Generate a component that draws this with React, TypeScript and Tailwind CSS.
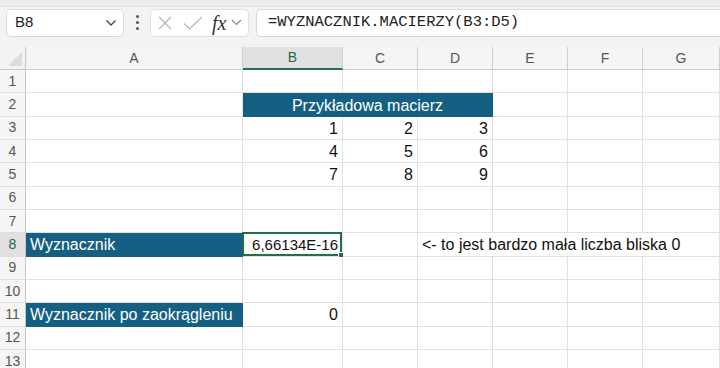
import React from "react";

type Cell = {
  text?: string;
  span?: number;
  align?: "left" | "right" | "center";
  fill?: boolean;
  selected?: boolean;
};

const cols = ["A", "B", "C", "D", "E", "F", "G"];

const empty = (n: number): Cell[] => Array.from({ length: n }, () => ({}));

const rows: Cell[][] = [
  empty(7),
  [{}, { text: "Przykładowa macierz", span: 3, align: "center", fill: true }, ...empty(3)],
  [{}, { text: "1", align: "right" }, { text: "2", align: "right" }, { text: "3", align: "right" }, ...empty(3)],
  [{}, { text: "4", align: "right" }, { text: "5", align: "right" }, { text: "6", align: "right" }, ...empty(3)],
  [{}, { text: "7", align: "right" }, { text: "8", align: "right" }, { text: "9", align: "right" }, ...empty(3)],
  empty(7),
  empty(7),
  [
    { text: "Wyznacznik", fill: true },
    { text: "6,66134E-16", align: "right", selected: true },
    {},
    { text: "<- to jest bardzo mała liczba bliska 0", span: 4 },
  ],
  empty(7),
  empty(7),
  [{ text: "Wyznacznik po zaokrągleniu", fill: true }, { text: "0", align: "right" }, ...empty(5)],
  empty(7),
  empty(7),
];

const spanClass: Record<number, string> = {
  1: "col-span-1",
  3: "col-span-3",
  4: "col-span-4",
};

const GridCell = ({ cell }: { cell: Cell }) => {
  const align =
    cell.align === "right"
      ? "justify-end pr-[4px]"
      : cell.align === "center"
      ? "justify-center"
      : "justify-start pl-[4px]";
  return (
    <div
      className={`relative flex items-center h-[23.33px] whitespace-nowrap border-r border-b ${
        spanClass[cell.span ?? 1]
      } ${align} ${
        cell.fill
          ? "bg-[#156082] text-white border-[#156082]"
          : "bg-white text-[#111] border-[#e1e1e1]"
      }`}
    >
      {cell.text && (
        <span className={`pt-[2px] ${cell.selected ? "text-[15px]" : ""}`}>{cell.text}</span>
      )}
      {cell.selected && (
        <>
          <div className="absolute -left-[1px] -top-[1px] right-0 bottom-0 border-2 border-[#217346]" />
          <div className="absolute -right-[3px] -bottom-[3px] w-[7px] h-[7px] bg-[#217346] border border-white" />
        </>
      )}
    </div>
  );
};

const Toolbar = () => (
  <div className="h-[47px] bg-[#f3f3f3] overflow-hidden">
    <div className="h-[7px] bg-[#ebebeb] border-b border-[#e2e2e2]" />
    <div className="flex items-center pt-[1px] pl-[6px] h-[30px]">
      <div className="shrink-0 w-[118px] h-[28px] bg-white border border-[#d9d9d9] rounded-[5px] flex items-center justify-between pl-[8px] pr-[6px] text-[15px] text-[#222]">
        <span>B8</span>
        <svg width="12" height="8" viewBox="0 0 12 8" fill="none">
          <path d="M1.5 1.5 L6 6 L10.5 1.5" stroke="#444" strokeWidth="1.3" />
        </svg>
      </div>
      <div className="shrink-0 w-[26px] flex flex-col items-center justify-center gap-[3px]">
        <span className="w-[3px] h-[3px] rounded-full bg-[#555]" />
        <span className="w-[3px] h-[3px] rounded-full bg-[#555]" />
        <span className="w-[3px] h-[3px] rounded-full bg-[#555]" />
      </div>
      <div className="shrink-0 w-[99px] h-[28px] bg-white border border-[#e0e0e0] rounded-[5px] flex items-center pl-[7px]">
        <svg width="14" height="14" viewBox="0 0 14 14" fill="none">
          <path d="M1 1 L13 13 M13 1 L1 13" stroke="#b5b5b5" strokeWidth="1.2" />
        </svg>
        <svg width="20" height="14" viewBox="0 0 20 14" fill="none" className="ml-[11px]">
          <path d="M1 7.5 L6.5 13 L19 1" stroke="#b5b5b5" strokeWidth="1.2" />
        </svg>
        <span className="ml-[9px] italic text-[20px] leading-none text-[#333] [font-family:'Liberation_Serif',serif]">
          fx
        </span>
        <svg width="11" height="7" viewBox="0 0 11 7" fill="none" className="ml-[5px]">
          <path d="M1 1 L5.5 5.5 L10 1" stroke="#8a8a8a" strokeWidth="1.2" />
        </svg>
      </div>
      <div className="shrink-0 ml-[7px] w-[480px] h-[28px] bg-white border border-[#d9d9d9] rounded-[5px] flex items-center pl-[11px] text-[15.5px] text-[#222] [font-family:'Liberation_Mono',monospace]">
        =WYZNACZNIK.MACIERZY(B3:D5)
      </div>
    </div>
  </div>
);

const App = () => {
  return (
    <div className="w-[720px] h-[368px] overflow-hidden bg-white text-[16px] [font-family:'Liberation_Sans',Arial,sans-serif]">
      <Toolbar />
      <div className="grid grid-cols-[26px_217px_100px_75px_75px_75px_75px_1fr]">
        <div className="relative h-[23px] bg-[#f3f3f3] border-r border-b border-[#c8c8c8]">
          <svg width="14" height="14" viewBox="0 0 14 14" className="absolute left-[8px] top-[5px]">
            <polygon points="14,0 14,14 0,14" fill="#dcdcdc" />
          </svg>
        </div>
        {cols.map((c) => (
          <div
            key={c}
            className={`h-[23px] flex items-center justify-center text-[14px] border-r ${
              c === "B"
                ? "bg-[#e1e1e1] text-[#1e6b41] border-b-2 border-b-[#217346] border-r-[#d0d0d0]"
                : "bg-[#f5f5f5] text-[#555] border-b border-[#cfcfcf]"
            }`}
          >
            {c}
          </div>
        ))}
        {rows.map((row, r) => (
          <React.Fragment key={r}>
            <div
              className={`h-[23.33px] flex items-center justify-center text-[14px] border-r border-b border-r-[#c8c8c8] border-b-[#dcdcdc] ${
                r === 7 ? "bg-[#e1e1e1] text-[#1e6b41]" : "bg-[#f5f5f5] text-[#555]"
              }`}
            >
              {r + 1}
            </div>
            {row.map((cell, i) => (
              <GridCell key={i} cell={cell} />
            ))}
          </React.Fragment>
        ))}
      </div>
    </div>
  );
};

export default App;
